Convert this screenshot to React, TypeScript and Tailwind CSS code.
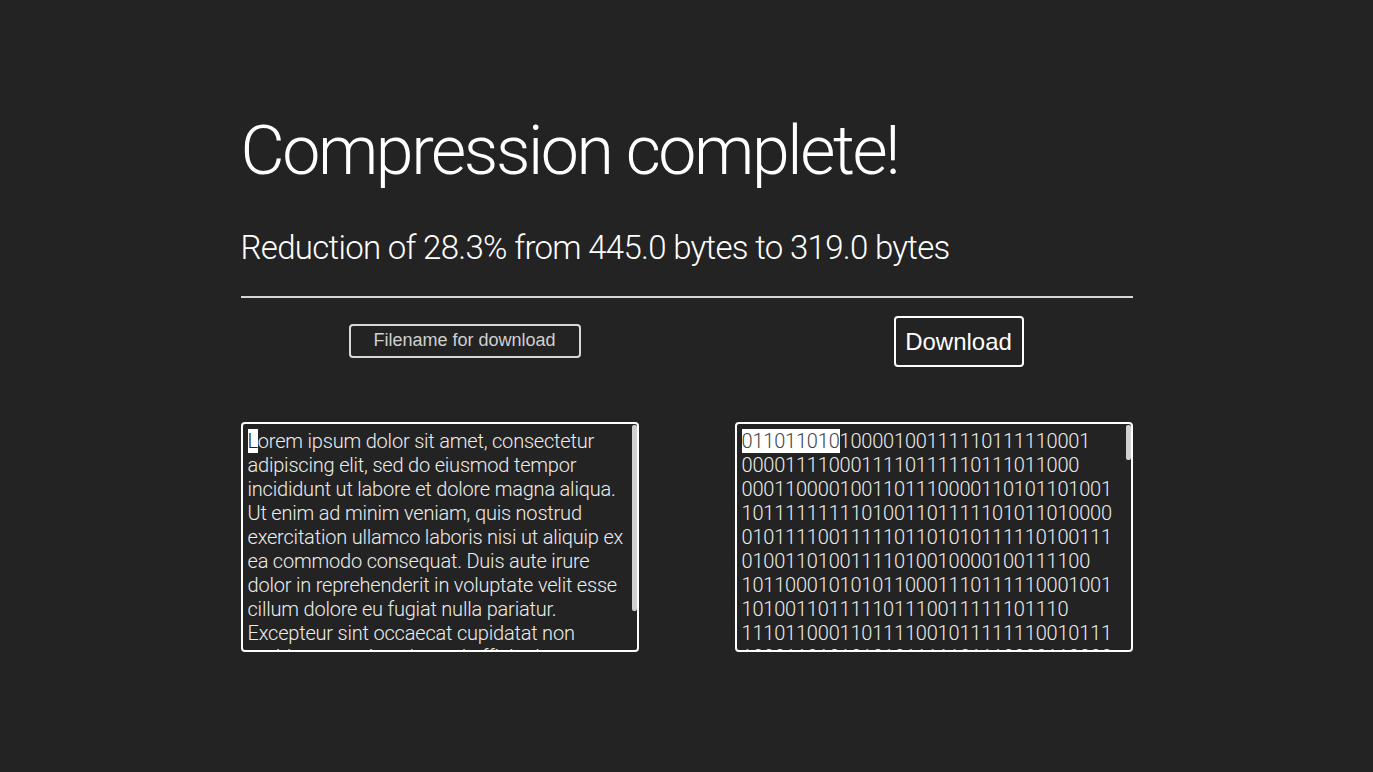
const LEFT_LINES = [
  'orem ipsum dolor sit amet, consectetur',
  'adipiscing elit, sed do eiusmod tempor',
  'incididunt ut labore et dolore magna aliqua.',
  'Ut enim ad minim veniam, quis nostrud',
  'exercitation ullamco laboris nisi ut aliquip ex',
  'ea commodo consequat. Duis aute irure',
  'dolor in reprehenderit in voluptate velit esse',
  'cillum dolore eu fugiat nulla pariatur.',
  'Excepteur sint occaecat cupidatat non',
  'proident, sunt in culpa qui officia deserunt',
  'mollit anim id est laborum.',
];

const BIN_LINES = [
  '10000100111110111110001',
  '0000111100011110111110111011000',
  '0001100001001101110000110101101001',
  '1011111111101001101111101011010000',
  '0101111001111101101010111110100111',
  '01001101001111010010000100111100',
  '1011000101010110001110111110001001',
  '101001101111101110011111101110',
  '1110110001101111001011111110010111',
  '1000110101010101111101110000110000',
];

const box =
  'relative h-[230px] w-[398px] overflow-hidden rounded-[4px] border-2 border-white p-[5px] text-[20px] leading-[24px] font-light tracking-[-0.2px] text-[#ededed] whitespace-pre';

export default function App() {
  return (
    <div className="min-h-[772px] bg-[#232323] font-['Roboto',sans-serif] text-white">
      <div className="mx-auto w-[892px] pt-[117px]">
        <h1 className="text-[68px] leading-none font-light tracking-[-2.4px]">Compression complete!</h1>
        <p className="mt-[46px] text-[33px] leading-none font-light tracking-[-0.7px]">
          Reduction of 28.3% from 445.0 bytes to 319.0 bytes
        </p>
        <hr className="mt-[32px] border-0 border-t-2 border-[#d6d6d6]" />

        <div className="mt-[18px] flex items-center">
          <div className="ml-[108px] mb-[2px] flex h-[34px] w-[232px] items-center justify-center rounded-[4px] border-2 border-[#d8d8d8] font-['Liberation_Sans',sans-serif] text-[18px] text-[#d0d0d0]">
            Filename for download
          </div>
          <button className="ml-[313px] h-[51px] w-[130px] rounded-[4px] border-2 border-white font-['Liberation_Sans',sans-serif] text-[24px] text-white">
            Download
          </button>
        </div>

        <div className="mt-[55px] flex justify-between">
          <div className={box}>
            <span className="bg-white text-[#232323]">L</span>
            {LEFT_LINES.join('\n')}
            <div className="absolute top-[1px] right-0 h-[186px] w-[5px] rounded-[2px] bg-[#d0d0d0]" />
          </div>
          <div className={box}>
            <span className="bg-white text-[#444444]">011011010</span>
            {BIN_LINES.join('\n')}
            <div className="absolute top-[1px] right-0 h-[35px] w-[5px] rounded-[2px] bg-[#d0d0d0]" />
          </div>
        </div>
      </div>
    </div>
  );
}
